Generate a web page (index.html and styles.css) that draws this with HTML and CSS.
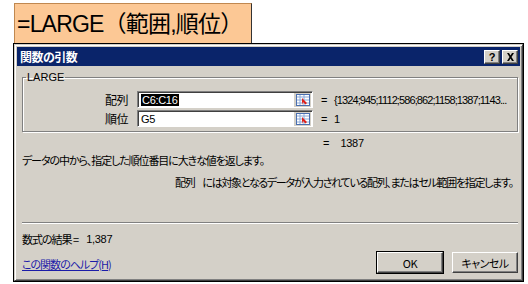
FILE: index.html
```html
<!DOCTYPE html>
<html lang="ja">
<head>
<meta charset="utf-8">
<link rel="stylesheet" href="styles.css">
</head>
<body>
<div class="page">
  <div class="formula">=LARGE（範囲,順位）</div>
  <div class="dialog">
    <div class="titlebar">
      <span class="title">関数の引数</span>
      <div class="tbtns">
        <span class="tbtn">?</span>
        <span class="tbtn x">
          <svg width="9" height="8" viewBox="0 0 9 8"><path d="M1 0h2l1.5 2.5L6 0h2L5.5 4 8 8H6L4.5 5.5 3 8H1l2.5-4z" fill="#000"/></svg>
        </span>
      </div>
    </div>
    <div class="body">
      <fieldset class="group">
        <legend>LARGE</legend>
        <div class="args">
          <span class="lbl">配列</span>
          <div class="field"><span class="sel">C6:C16</span><span class="refbtn"><svg width="14" height="12" viewBox="0 0 14 12"><rect x="0.5" y="0.5" width="13" height="11" fill="#fff" stroke="#4a6fb0"/><path d="M1 3h12M1 6h12M1 9h12M4 1v10M8 1v10" stroke="#8aa8d8" stroke-width="1"/><path d="M6 4l5 5-1.5 1.5L7 8l-1 3z" fill="#e0201a"/></svg></span></div>
          <span class="eq">=</span>
          <span class="val">{1324;945;1112;586;862;1158;1387;1143...</span>
          <span class="lbl">順位</span>
          <div class="field"><span class="txt">G5</span><span class="refbtn"><svg width="14" height="12" viewBox="0 0 14 12"><rect x="0.5" y="0.5" width="13" height="11" fill="#fff" stroke="#4a6fb0"/><path d="M1 3h12M1 6h12M1 9h12M4 1v10M8 1v10" stroke="#8aa8d8" stroke-width="1"/><path d="M6 4l5 5-1.5 1.5L7 8l-1 3z" fill="#e0201a"/></svg></span></div>
          <span class="eq">=</span>
          <span class="val">1</span>
        </div>
      </fieldset>
      <div class="result-line"><span class="eq">=</span><span class="val">1387</span></div>
      <p class="desc">データの中から、指定した順位番目に大きな値を返します。</p>
      <p class="argdesc"><span class="argname">配列</span>には対象となるデータが入力されている配列、またはセル範囲を指定します。</p>
      <div class="sep"></div>
      <div class="formres"><span>数式の結果 =</span><span class="num">1,387</span></div>
      <div class="footer">
        <a class="help" href="#">この関数のヘルプ(H)</a>
        <div class="buttons">
          <button class="btn default">OK</button>
          <button class="btn">キャンセル</button>
        </div>
      </div>
    </div>
  </div>
</div>
</body>
</html>
```

FILE: styles.css
```css
* { box-sizing: border-box; }
html, body { margin: 0; padding: 0; background: #fff; }
body {
  font-family: "Noto Sans CJK JP", "Noto Sans", sans-serif;
  font-feature-settings: "palt";
  font-size: 11px;
  color: #000;
}
.page {
  padding: 3px 0 0 14px;
  width: 528px;
  height: 284px;
}
.formula {
  width: 238px;
  height: 41px;
  background: #fcc895;
  border: 1px solid #c08850;
  border-right-color: #333;
  border-bottom: none;
  font-family: "Liberation Sans", "Noto Sans CJK JP", sans-serif;
  font-size: 23px;
  line-height: 40px;
  padding-left: 2px;
  letter-spacing: -0.8px;
  font-feature-settings: normal;
  white-space: nowrap;
}
.dialog {
  width: 509px;
  height: 237px;
  background: #d4d0c8;
  border: 1px solid #404040;
  border-top-color: #d4d0c8;
  border-left-color: #d4d0c8;
  box-shadow: inset 1px 1px 0 #fff, inset -1px -1px 0 #808080;
  padding: 2px;
  display: flex;
  flex-direction: column;
  outline: 1px solid #000;
}
.titlebar {
  height: 19px;
  background: #0a246a;
  display: flex;
  align-items: center;
  justify-content: space-between;
  padding: 0 2px 0 3px;
}
.title {
  color: #fff;
  font-weight: bold;
  font-size: 12px;
  letter-spacing: -0.5px;
}
.tbtns { display: flex; gap: 2px; }
.tbtn {
  width: 16px;
  height: 14px;
  background: #d4d0c8;
  border: 1px solid;
  border-color: #fff #404040 #404040 #fff;
  box-shadow: inset -1px -1px 0 #808080;
  font-family: "Liberation Sans", sans-serif;
  font-weight: bold;
  font-size: 11px;
  line-height: 12px;
  text-align: center;
  display: flex;
  align-items: center;
  justify-content: center;
}
.body {
  flex: 1;
  padding: 6px 3px 0 5px;
  display: flex;
  flex-direction: column;
}
.group {
  margin: 0;
  padding: 4px 0 6px 0;
  border: 1px solid #808080;
  box-shadow: 1px 1px 0 #fff, inset 1px 1px 0 #fff;
  height: 60px;
  width: 496px;
}
.group legend {
  padding: 0 1px;
  margin-left: 3px;
  font-family: "Liberation Sans", sans-serif;
  font-size: 11px;
  line-height: 11px;
}
.args {
  display: grid;
  grid-template-columns: 114px 176px 20px 1fr;
  column-gap: 0;
  row-gap: 2px;
  align-items: center;
  padding-top: 4px;
}
.lbl {
  text-align: right;
  padding-right: 9px;
  font-size: 12px;
  letter-spacing: -0.5px;
}
.field {
  height: 17px;
  background: #fff;
  border: 1px solid;
  border-color: #808080 #fff #fff #808080;
  box-shadow: inset 1px 1px 0 #404040;
  display: flex;
  align-items: center;
  justify-content: space-between;
  padding: 1px 1px 0 3px;
  font-family: "Liberation Sans", sans-serif;
  font-size: 11px;
  letter-spacing: -0.3px;
}
.sel { background: #000; color: #fff; line-height: 12px; padding: 0 1px; }
.refbtn {
  width: 17px;
  height: 14px;
  background: #d4d0c8;
  display: flex;
  align-items: center;
  justify-content: center;
}
.eq { padding-left: 8px; font-family: "Liberation Sans", sans-serif; }
.val {
  font-family: "Liberation Sans", sans-serif;
  font-size: 11px;
  letter-spacing: -0.9px;
  padding-left: 1px;
  white-space: nowrap;
}
.result-line {
  display: flex;
  padding-left: 293px;
  height: 16px;
  align-items: center;
  margin-top: 3px;
}
.result-line .val { padding-left: 11px; letter-spacing: -0.3px; }
.desc { margin: 0; height: 18px; line-height: 18px; font-size: 11px; letter-spacing: -1.1px; }
.argdesc { margin: 4px 0 0 0; padding-left: 153px; height: 18px; line-height: 18px; font-size: 11px; letter-spacing: -1.3px; white-space: nowrap; }
.argname { margin-right: 8px; }
.sep {
  margin-top: 31px;
  width: 496px;
  border-top: 1px solid #808080;
  border-bottom: 1px solid #fff;
}
.formres {
  margin-top: 7px;
  display: flex;
  gap: 8px;
  font-size: 11px;
  letter-spacing: -1px;
  height: 16px;
  align-items: center;
}
.formres .num { font-family: "Liberation Sans", sans-serif; letter-spacing: -0.3px; }
.footer {
  display: flex;
  justify-content: space-between;
  align-items: center;
  width: 496px;
  margin-top: 5px;
}
.help { font-size: 11px; letter-spacing: -1px; text-decoration: underline; color: #1c1ca8; margin-top: 2px; }
.buttons { display: flex; gap: 9px; }
.btn {
  width: 66px;
  height: 21px;
  background: #d4d0c8;
  border: 1px solid;
  border-color: #fff #404040 #404040 #fff;
  box-shadow: inset -1px -1px 0 #808080;
  font-family: "Noto Sans CJK JP", sans-serif;
  font-feature-settings: "palt";
  font-size: 11px;
  letter-spacing: -0.5px;
  padding: 0;
  color: #000;
}
.btn.default { outline: 1px solid #000; }
```
